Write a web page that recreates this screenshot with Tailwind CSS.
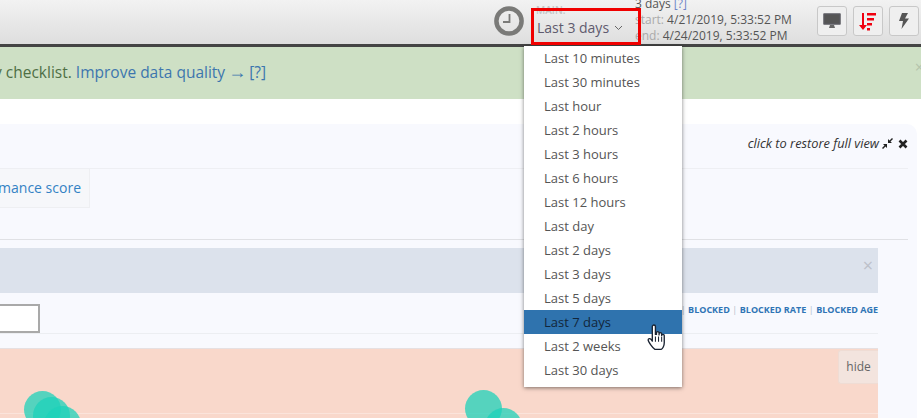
<!DOCTYPE html>
<html lang="en">
<head>
<meta charset="UTF-8">
<title>Time range</title>
<script src="https://cdn.jsdelivr.net/npm/@tailwindcss/browser@4"></script>
</head>
<body class="bg-white overflow-hidden font-['Open_Sans',sans-serif]">
<div class="relative w-[921px] h-[418px] overflow-hidden">
  <!-- Top bar -->
  <header class="h-[47px] bg-gradient-to-b from-[#f2f2f2] to-[#dedede] border-b-[3px] border-[#444] flex relative">
    <svg class="absolute left-[494px] top-[6px]" width="30" height="30" viewBox="0 0 30 30" fill="none">
      <circle cx="15" cy="15" r="12.6" stroke="#7a7a78" stroke-width="4.500"/>
      <path d="M15.500 8v8H9" stroke="#7a7a78" stroke-width="1.800"/>
    </svg>
    <div class="absolute left-[536px] top-[3px] text-[10px] leading-[14px] font-semibold text-[#c4c4c4]">MAIN:</div>
    <div class="absolute left-[537px] top-[18px] flex items-center gap-[5px] text-sm leading-5 text-[#5f5b6e]">
      Last 3 days
      <svg width="9" height="6" viewBox="0 0 9 6" fill="none"><path d="M1 1l3.500 3.500L8 1" stroke="#666" stroke-width="1"/></svg>
    </div>
    <div class="absolute left-[635px] top-[-4px] text-xs leading-4 text-[#555]">
      <div>3 days <span class="text-[#6f86c8]">[?]</span></div>
      <div><span class="text-[#aaa]">start:</span> 4/21/2019, 5:33:52 PM</div>
      <div><span class="text-[#aaa]">end:</span> 4/24/2019, 5:33:52 PM</div>
    </div>
    <div class="absolute left-[817px] top-[6px] flex gap-[6px]">
      <div class="w-[30px] h-[30px] rounded-[3px] border border-[#c8c8c8] bg-[#efefef] flex items-center justify-center">
        <svg width="18" height="16" viewBox="0 0 18 16"><path d="M1 1h16v10H1z" fill="#555" stroke="#5a5a60" stroke-width="1.500" stroke-linejoin="round"/><path d="M6 15h6l-1-3H7z" fill="#666"/></svg>
      </div>
      <div class="w-[30px] h-[30px] rounded-[3px] border border-[#c8c8c8] bg-[#efefef] flex items-center justify-center">
        <svg width="18" height="19" viewBox="0 0 18 19" fill="#f0000f"><path d="M3 1h2v12h3l-4 5-4-5h3z"/><path d="M8 1h9v2.500H8zM8 6h7v2.500H8zM8 11h5v2.500H8zM8 16h3v2.500H8z"/></svg>
      </div>
      <div class="w-[30px] h-[30px] rounded-[3px] border border-[#c8c8c8] bg-[#efefef] flex items-center justify-center">
        <svg width="10" height="16" viewBox="0 0 10 16"><path d="M3 0h6L6 5.500h4L2.500 16 4 8H0z" fill="#555"/></svg>
      </div>
    </div>
  </header>

  <!-- Notice -->
  <div class="h-[52px] bg-[#cee0c5] flex items-center text-[15.500px] text-[#4f6f45] relative whitespace-nowrap">
    <span class="-ml-[6px]">y checklist.&nbsp;<span class="text-[#3d76ae]">Improve data quality<span class="inline-block w-[24px] text-center text-lg leading-4">→</span>[?]</span></span>
    <span class="absolute right-[-3px] top-[10px] text-base leading-5 text-[#b4c4ac]">×</span>
  </div>

  <!-- Panel -->
  <section class="mt-[25px] mr-[4px] h-[294px] bg-[#f8f9fe] rounded-tr-[10px]">
    <div class="h-[45px] mr-[9px] pb-[5px] border-b border-[#eeeff3] flex items-center justify-end gap-[3px] text-[12.800px] italic text-[#333]">
      click to restore full view
      <svg width="11" height="11" viewBox="0 0 11 11" fill="#222"><path d="M6 1v4h4L8.500 3.500 11 1 10 0 7.500 2.500zM5 10V6H1l1.500 1.500L0 10l1 1 2.500-2.500z"/></svg>
      <svg width="10" height="10" viewBox="0 0 10 10" class="ml-[2px]"><path d="M1.500 1.500l7 7M8.500 1.500l-7 7" stroke="#222" stroke-width="2.600"/></svg>
    </div>
    <div class="h-[71px] mr-[9px] border-b border-[#e0e1e5]">
      <div class="w-[90px] h-[39px] bg-[#f6f7fa] border-r border-b border-[#eeeff2] flex items-center justify-end pr-[8px] text-sm text-[#3482c4] overflow-hidden whitespace-nowrap">mance score</div>
    </div>
    <div class="w-[878px] mt-[8px]">
      <div class="h-[45px] bg-[#dce2ec] relative">
        <span class="absolute right-[5px] top-[5px] text-lg leading-6 text-[#bcc0c9]">×</span>
      </div>
      <div class="h-[41px] pt-[11px] border-b border-[#eceef2] relative">
        <div class="w-[40px] h-[29px] bg-white border-2 border-l-0 border-[#a9a9a9]"></div>
        <div class="absolute right-0 top-[9px] flex gap-[2.500px] text-[9px] leading-4 font-bold text-[#2f74b5] whitespace-nowrap">
          <span class="font-normal text-[#b5bccb]">|</span><span>BLOCKED</span><span class="font-normal text-[#b5bccb]">|</span><span>BLOCKED RATE</span><span class="font-normal text-[#b5bccb]">|</span><span>BLOCKED AGE</span>
        </div>
      </div>
      <div class="h-[14px]"></div>
      <!-- Chart -->
      <div class="h-[70px] bg-[#f9d8cb] border-t border-[#e6e0e2] relative overflow-hidden">
        <div class="absolute left-0 right-0 top-[64px] h-px bg-[#fbe4db]"></div>
        <div class="absolute left-[24px] top-[42px] w-[37px] h-[37px] rounded-full bg-[#1dd1b9]/75"></div>
        <div class="absolute left-[33px] top-[48px] w-[37px] h-[37px] rounded-full bg-[#1dd1b9]/75"></div>
        <div class="absolute left-[44px] top-[57px] w-[37px] h-[37px] rounded-full bg-[#1dd1b9]/75"></div>
        <div class="absolute left-[465px] top-[41px] w-[37px] h-[37px] rounded-full bg-[#1dd1b9]/75"></div>
        <div class="absolute left-[485px] top-[59px] w-[37px] h-[37px] rounded-full bg-[#1dd1b9]/75"></div>
        <div class="absolute right-0 top-[1px] w-[40px] h-[34px] bg-[#f3e4de] rounded-l-[3px] border border-r-0 border-[#efdcd4] flex items-center justify-center text-xs text-[#666]">hide</div>
      </div>
    </div>
  </section>

  <!-- Dropdown menu -->
  <ul class="absolute left-[524px] top-[46px] w-[158px] h-[341px] bg-white shadow-[0_1px_4px_rgba(0,0,0,0.5)] text-[13px] leading-6 text-[#555] z-10">
    <li class="pl-[20px]">Last 10 minutes</li>
    <li class="pl-[20px]">Last 30 minutes</li>
    <li class="pl-[20px]">Last hour</li>
    <li class="pl-[20px]">Last 2 hours</li>
    <li class="pl-[20px]">Last 3 hours</li>
    <li class="pl-[20px]">Last 6 hours</li>
    <li class="pl-[20px]">Last 12 hours</li>
    <li class="pl-[20px]">Last day</li>
    <li class="pl-[20px]">Last 2 days</li>
    <li class="pl-[20px]">Last 3 days</li>
    <li class="pl-[20px]">Last 5 days</li>
    <li class="pl-[20px] bg-[#2f73ae] text-[#12263a]">Last 7 days</li>
    <li class="pl-[20px]">Last 2 weeks</li>
    <li class="pl-[20px]">Last 30 days</li>
  </ul>

  <!-- Annotation box -->
  <div class="absolute left-[531px] top-[8px] w-[110px] h-[37px] border-[3px] border-[#f00000] z-20"></div>

  <!-- Hand cursor -->
  <svg class="absolute left-[647px] top-[324px] z-20" width="21" height="27" viewBox="0 0 20 26">
    <path d="M5 2.500c0-2 3-2 3 0V10l1 0V8.500c0-1.500 2.500-1.500 2.500 0V10.500V9.500c0-1.500 2.500-1.500 2.500 0v1.500c0-1.300 2.500-1.300 2.500 0V18c0 3-1.500 6-3 6.500H7.500C5.500 23.500 1 17 1 15.500c0-1.500 1.500-2 3-.5l1 1.500z" fill="#fff" stroke="#1a2332" stroke-width="1.300" stroke-linejoin="round"/>
    <path d="M8 12v5M11 12v5M14 12v5" stroke="#1a2332" stroke-width="1"/>
  </svg>
</div>
</body>
</html>
